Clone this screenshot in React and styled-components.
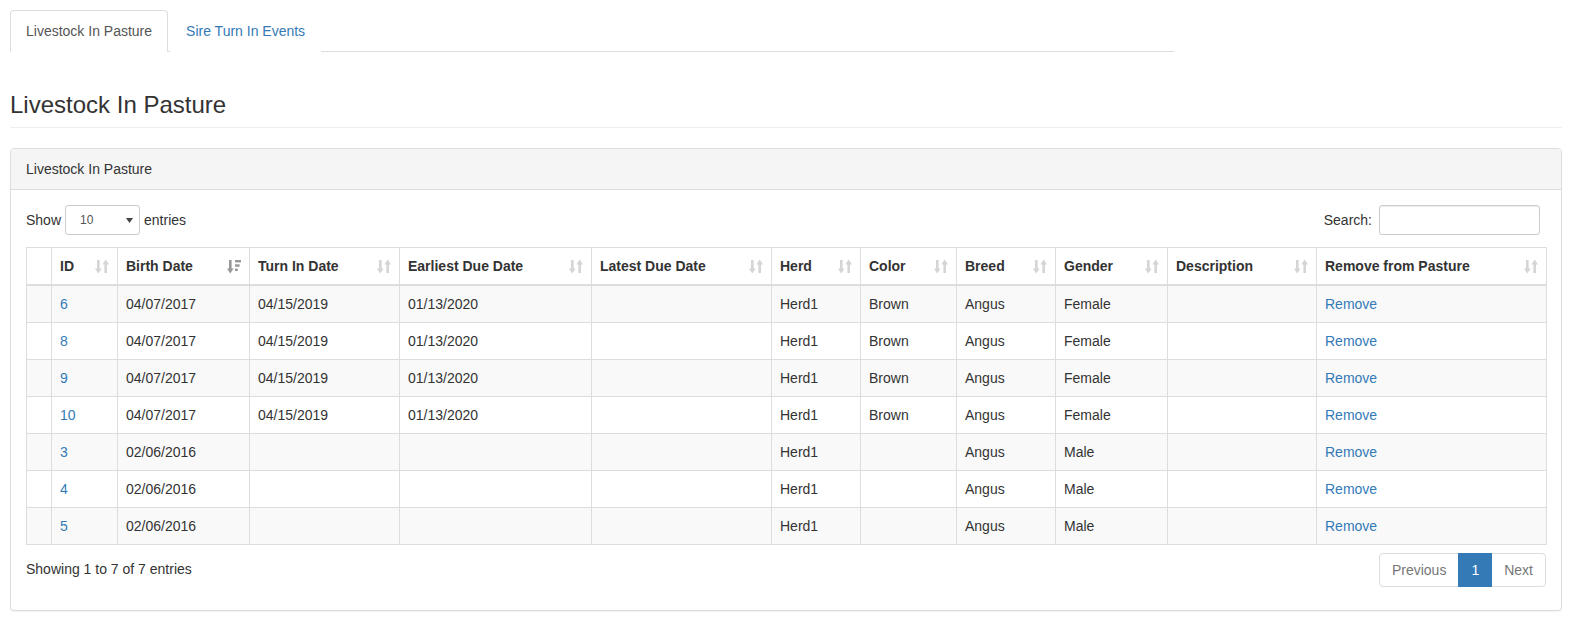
import React from 'react';
import styled, { createGlobalStyle } from 'styled-components';

const GlobalStyle = createGlobalStyle`
  * { box-sizing: border-box; }
  html, body { margin: 0; padding: 0; background: #fff; }
  body {
    font-family: "Liberation Sans", Arial, Helvetica, sans-serif;
    font-size: 14px;
    line-height: 1.42857143;
    color: #333;
  }
`;

const Page = styled.div`
  width: 1572px;
  padding: 10px;
`;

const TabsRow = styled.ul`
  width: 75%;
  display: flex;
  list-style: none;
  margin: 0;
  padding: 0;
  border-bottom: 1px solid #ddd;
`;

const TabItem = styled.li`
  margin-bottom: -1px;
  margin-right: 2px;
`;

const TabLink = styled.a`
  display: block;
  padding: 10px 15px;
  line-height: 20px;
  border: 1px solid ${p => (p.$active ? '#ddd' : 'transparent')};
  border-bottom-color: ${p => (p.$active ? '#fff' : 'transparent')};
  border-radius: 4px 4px 0 0;
  background: #fff;
  color: ${p => (p.$active ? '#555' : '#337ab7')};
  text-decoration: none;
  cursor: pointer;
`;

const PageHeader = styled.div`
  margin: 40px 0 20px;
  padding-bottom: 9px;
  border-bottom: 1px solid #eee;
`;

const Title = styled.h3`
  margin: 0;
  font-size: 24px;
  font-weight: 500;
  line-height: 1.1;
  color: #333;
`;

const Panel = styled.div`
  border: 1px solid #ddd;
  border-radius: 4px;
  background: #fff;
  box-shadow: 0 1px 1px rgba(0, 0, 0, 0.05);
`;

const PanelHeading = styled.div`
  padding: 10px 15px;
  background: #f5f5f5;
  border-bottom: 1px solid #ddd;
  border-radius: 3px 3px 0 0;
  color: #333;
`;

const PanelBody = styled.div`
  padding: 15px 15px 21px;
`;

const Controls = styled.div`
  display: flex;
  justify-content: space-between;
  align-items: flex-start;
  height: 36px;
`;

const ControlLabel = styled.label`
  display: flex;
  align-items: center;
  gap: ${p => p.$gap || 4}px;
  height: 30px;
  padding-right: ${p => p.$pr || 0}px;
  white-space: nowrap;
`;

const SelectBox = styled.div`
  width: 75px;
  height: 30px;
  display: flex;
  align-items: center;
  justify-content: space-between;
  padding: 0 6px 0 14px;
  border: 1px solid #ccc;
  border-radius: 3px;
  font-size: 12px;
  color: #555;
  background: #fff;
`;

const SearchInput = styled.input`
  width: 161px;
  height: 30px;
  border: 1px solid #ccc;
  border-radius: 3px;
  padding: 5px 10px;
  font-size: 12px;
  font-family: inherit;
  box-shadow: inset 0 1px 1px rgba(0, 0, 0, 0.075);
  outline: none;
`;

const Table = styled.table`
  width: 100%;
  table-layout: fixed;
  border-collapse: collapse;
  border-spacing: 0;
  border: 1px solid #ddd;
  margin: 6px 0;
`;

const Th = styled.th`
  text-align: left;
  font-weight: bold;
  padding: 8px;
  line-height: 20px;
  border: 1px solid #ddd;
  border-bottom-width: 2px;
  vertical-align: bottom;
  white-space: nowrap;
`;

const HeadInner = styled.div`
  display: flex;
  justify-content: space-between;
  align-items: center;
  height: 20px;
`;

const Tr = styled.tr`
  background: ${p => (p.$striped ? '#f9f9f9' : '#fff')};
`;

const Td = styled.td`
  padding: 8px;
  line-height: 20px;
  border: 1px solid #ddd;
  vertical-align: top;
  white-space: nowrap;
`;

const Link = styled.a`
  color: #337ab7;
  text-decoration: none;
  cursor: pointer;
`;

const Footer = styled.div`
  display: flex;
  justify-content: space-between;
  align-items: flex-start;
`;

const Info = styled.div`
  padding-top: 8px;
  white-space: nowrap;
`;

const Pagination = styled.ul`
  display: flex;
  list-style: none;
  margin: 2px 0;
  padding: 0;
`;

const PageButton = styled.li`
  position: relative;
  z-index: ${p => (p.$active ? 2 : 1)};
  margin-left: -1px;
  padding: 6px 12px;
  line-height: 20px;
  border: 1px solid ${p => (p.$active ? '#337ab7' : '#ddd')};
  background: ${p => (p.$active ? '#337ab7' : '#fff')};
  color: ${p => (p.$active ? '#fff' : '#777')};
  &:first-child {
    margin-left: 0;
    border-radius: 4px 0 0 4px;
  }
  &:last-child {
    border-radius: 0 4px 4px 0;
  }
`;

const IconSvg = styled.svg`
  flex: none;
  display: block;
  margin-top: 1px;
  opacity: ${p => p.$opacity};
`;

const SortBoth = () => (
  <IconSvg $opacity={0.2} width="14" height="15" viewBox="0 0 14 15">
    <g fill="#333">
      <rect x="2" y="1" width="2.6" height="9.5" />
      <polygon points="0,9.5 6.6,9.5 3.3,14.5" />
      <rect x="9.4" y="4.5" width="2.6" height="9.5" />
      <polygon points="7.4,5.5 14,5.5 10.7,0.5" />
    </g>
  </IconSvg>
);

const SortDesc = () => (
  <IconSvg $opacity={0.5} width="14" height="15" viewBox="0 0 14 15">
    <g fill="#333">
      <rect x="2" y="1" width="2.6" height="9.5" />
      <polygon points="0,9.5 6.6,9.5 3.3,14.5" />
      <rect x="8" y="1" width="6" height="2.4" />
      <rect x="8" y="5.3" width="4.6" height="2.4" />
      <rect x="8" y="9.6" width="2.8" height="2.4" />
    </g>
  </IconSvg>
);

const SelectArrow = () => (
  <svg width="7" height="5" viewBox="0 0 7 5">
    <polygon points="0,0 7,0 3.5,5" fill="#444" />
  </svg>
);

const columns = [
  { label: '', width: 25, sort: null },
  { label: 'ID', width: 66, sort: 'both' },
  { label: 'Birth Date', width: 132, sort: 'desc' },
  { label: 'Turn In Date', width: 150, sort: 'both' },
  { label: 'Earliest Due Date', width: 192, sort: 'both' },
  { label: 'Latest Due Date', width: 180, sort: 'both' },
  { label: 'Herd', width: 89, sort: 'both' },
  { label: 'Color', width: 96, sort: 'both' },
  { label: 'Breed', width: 99, sort: 'both' },
  { label: 'Gender', width: 112, sort: 'both' },
  { label: 'Description', width: 149, sort: 'both' },
  { label: 'Remove from Pasture', width: 230, sort: 'both' },
];

const female = ['04/07/2017', '04/15/2019', '01/13/2020', '', 'Herd1', 'Brown', 'Angus', 'Female', ''];
const male = ['02/06/2016', '', '', '', 'Herd1', '', 'Angus', 'Male', ''];

const rows = [
  ['6', ...female],
  ['8', ...female],
  ['9', ...female],
  ['10', ...female],
  ['3', ...male],
  ['4', ...male],
  ['5', ...male],
];

export default function App() {
  return (
    <>
      <GlobalStyle />
      <Page>
        <TabsRow>
          <TabItem>
            <TabLink $active>Livestock In Pasture</TabLink>
          </TabItem>
          <TabItem>
            <TabLink>Sire Turn In Events</TabLink>
          </TabItem>
        </TabsRow>

        <PageHeader>
          <Title>Livestock In Pasture</Title>
        </PageHeader>

        <Panel>
          <PanelHeading>Livestock In Pasture</PanelHeading>
          <PanelBody>
            <Controls>
              <ControlLabel>
                Show
                <SelectBox>
                  <span>10</span>
                  <SelectArrow />
                </SelectBox>
                entries
              </ControlLabel>
              <ControlLabel $gap={7} $pr={6}>
                Search:
                <SearchInput type="search" />
              </ControlLabel>
            </Controls>

            <Table>
              <colgroup>
                {columns.map((c, i) => (
                  <col key={i} style={{ width: c.width }} />
                ))}
              </colgroup>
              <thead>
                <tr>
                  {columns.map((c, i) => (
                    <Th key={i}>
                      <HeadInner>
                        <span>{c.label}</span>
                        {c.sort === 'both' && <SortBoth />}
                        {c.sort === 'desc' && <SortDesc />}
                      </HeadInner>
                    </Th>
                  ))}
                </tr>
              </thead>
              <tbody>
                {rows.map((r, ri) => (
                  <Tr key={ri} $striped={ri % 2 === 0}>
                    <Td />
                    <Td>
                      <Link>{r[0]}</Link>
                    </Td>
                    {r.slice(1).map((v, ci) => (
                      <Td key={ci}>{v}</Td>
                    ))}
                    <Td>
                      <Link>Remove</Link>
                    </Td>
                  </Tr>
                ))}
              </tbody>
            </Table>

            <Footer>
              <Info>Showing 1 to 7 of 7 entries</Info>
              <Pagination>
                <PageButton>Previous</PageButton>
                <PageButton $active>1</PageButton>
                <PageButton>Next</PageButton>
              </Pagination>
            </Footer>
          </PanelBody>
        </Panel>
      </Page>
    </>
  );
}
